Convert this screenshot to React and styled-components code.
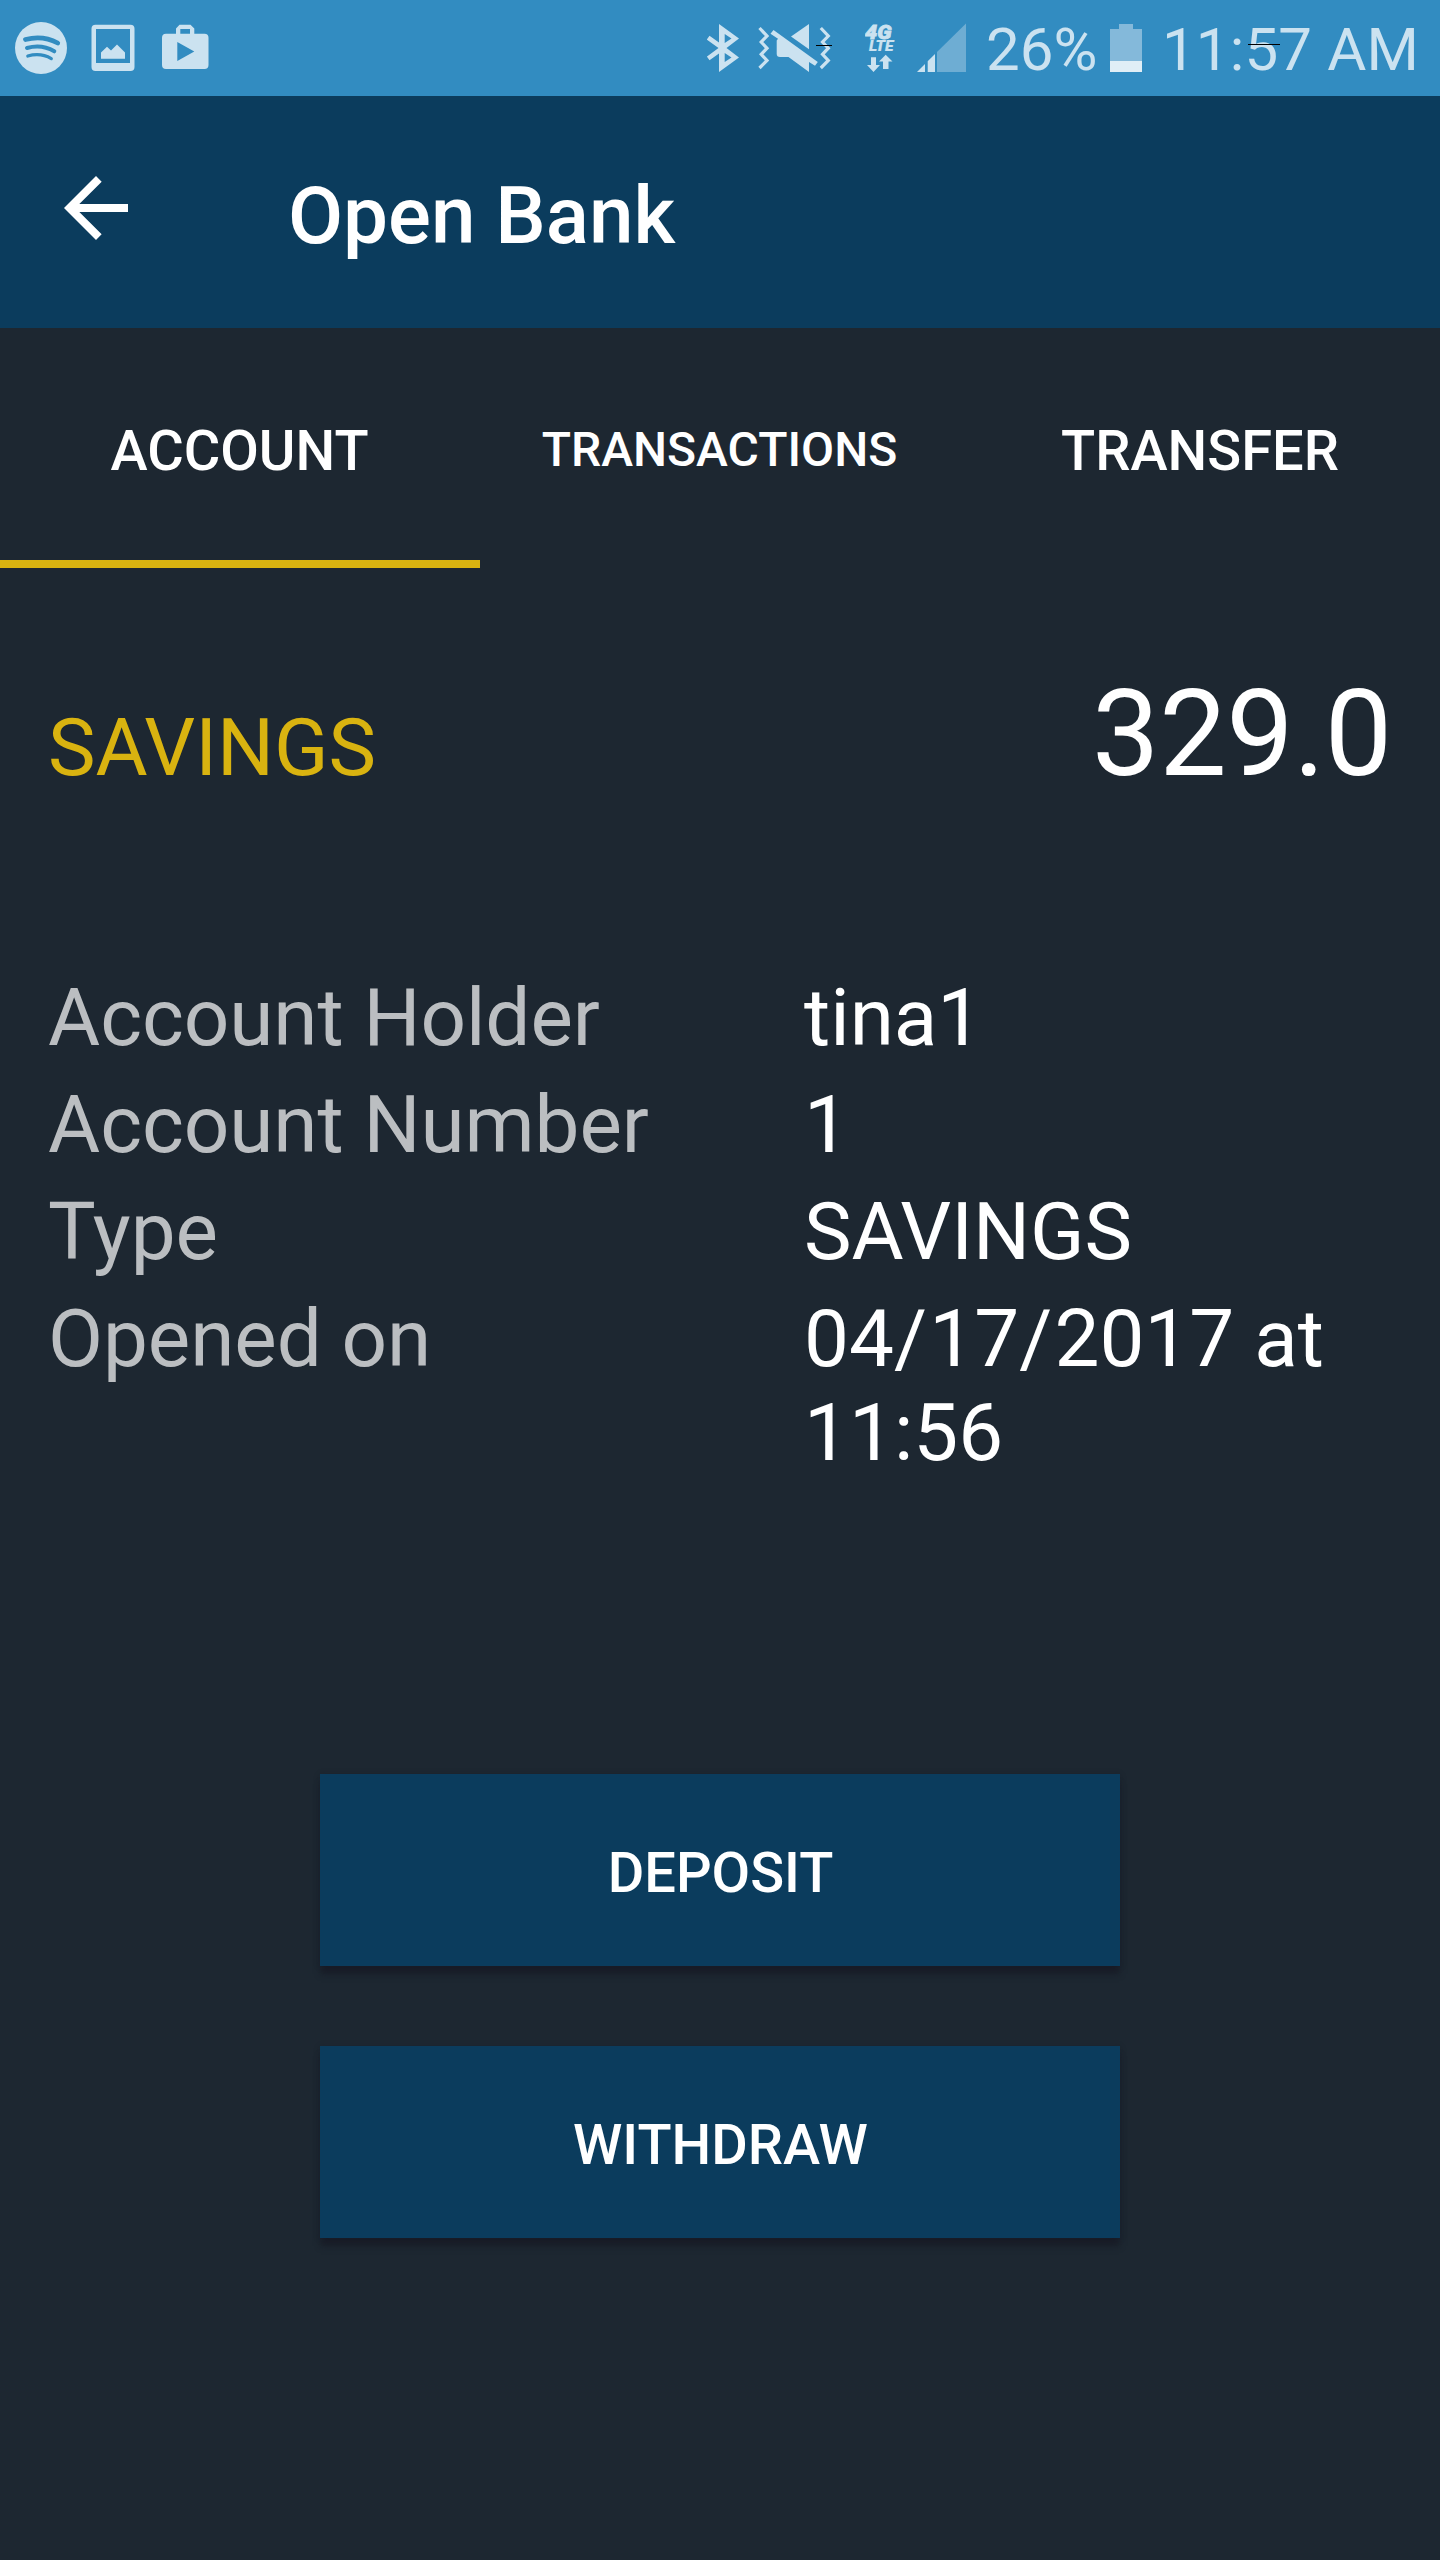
import React from 'react';
import styled, { createGlobalStyle } from 'styled-components';

const GlobalStyle = createGlobalStyle`
  *, *::before, *::after { box-sizing: border-box; }
  body {
    margin: 0;
    background: #1d2731;
    color: #ffffff;
    font-family: Roboto, "Liberation Sans", sans-serif;
  }
`;

const ICON = '#cbe2f0';

const Screen = styled.div`
  width: 1440px;
  height: 2560px;
  display: flex;
  flex-direction: column;
  background: #1d2731;
  overflow: hidden;
`;

const StatusBar = styled.div`
  height: 96px;
  flex: none;
  display: flex;
  justify-content: space-between;
  background: #328cc1;
  color: ${ICON};
`;

const StatusGroup = styled.div`
  display: flex;
  align-items: flex-start;
  padding-left: ${(p) => p.$inset || 0}px;
`;

const StatusIcon = styled.svg`
  display: block;
  flex: none;
  height: 96px;
  width: ${(p) => p.$width}px;
  margin-right: ${(p) => p.$gap || 0}px;
`;

const StatusText = styled.div`
  position: relative;
  flex: none;
  width: ${(p) => p.$width}px;
  padding-top: 15px;
  font-size: 60px;
  line-height: 70px;
  letter-spacing: ${(p) => p.$tracking || 0}px;
  white-space: nowrap;
`;

const ScanLine = styled.span`
  position: absolute;
  left: 86px;
  top: 44px;
  width: 32px;
  height: 1px;
  background: #000000;
`;

const AppBar = styled.header`
  height: 232px;
  flex: none;
  display: flex;
  align-items: flex-start;
  padding: 64px 48px 0;
  background: #0b3c5d;
`;

const BackButton = styled.button`
  width: 96px;
  height: 96px;
  padding: 0;
  border: 0;
  background: none;
  margin-right: 144px;
`;

const Title = styled.h1`
  margin: 9px 0 0;
  font-size: 80px;
  line-height: 94px;
  font-weight: 500;
`;

const Tabs = styled.nav`
  height: 240px;
  flex: none;
  display: grid;
  grid-template-columns: repeat(3, 1fr);
`;

const Tab = styled.div`
  display: flex;
  align-items: center;
  justify-content: center;
  padding-top: ${(p) => (p.$small ? 12 : 14)}px;
  padding-right: ${(p) => p.$nudge || 0}px;
  border-bottom: 8px solid ${(p) => (p.$active ? '#d9b310' : 'transparent')};
  font-size: ${(p) => (p.$small ? 48 : 56)}px;
  line-height: ${(p) => (p.$small ? 56 : 66)}px;
  font-weight: 500;
`;

const Content = styled.main`
  display: flex;
  flex-direction: column;
  padding: 96px 48px 0;
`;

const Summary = styled.div`
  display: flex;
  align-items: baseline;
  justify-content: space-between;
  height: 141px;
`;

const AccountType = styled.div`
  font-size: 80px;
  line-height: 94px;
  color: #d9b310;
`;

const Balance = styled.div`
  font-size: 120px;
  line-height: 141px;
  letter-spacing: -0.3px;
`;

const Details = styled.dl`
  margin: 166px 0 0;
  display: grid;
  grid-template-columns: 756px 1fr;
  row-gap: 13px;
  font-size: 80px;
  line-height: 94px;
`;

const Label = styled.dt`
  color: #bbbec1;
  letter-spacing: -0.06px;
`;

const Value = styled.dd`
  margin: 0;
`;

const Slash = styled.span`
  letter-spacing: 2.3px;
`;

const Actions = styled.div`
  margin-top: 294px;
  display: flex;
  flex-direction: column;
  align-items: center;
  gap: 80px;
`;

const ActionButton = styled.button`
  width: 800px;
  height: 192px;
  padding: 6px 0 0 1px;
  border: 0;
  background: #0b3c5d;
  color: #ffffff;
  font-family: inherit;
  font-size: 56px;
  line-height: 66px;
  font-weight: 500;
  box-shadow: 0 9px 6px -1px rgba(22, 22, 34, 0.6), 0 1px 6px rgba(20, 20, 30, 0.25);
`;

const details = [
  { label: 'Account Holder', value: 'tina1' },
  { label: 'Account Number', value: '1' },
  { label: 'Type', value: 'SAVINGS' },
  {
    label: 'Opened on',
    value: (
      <>
        04<Slash>/</Slash>17<Slash>/</Slash>2017 at 11:56
      </>
    ),
  },
];

const SpotifyIcon = () => (
  <StatusIcon $width={52} $gap={24} viewBox="15 0 52 96">
    <circle cx="41" cy="48" r="26" fill={ICON} />
    <g fill="none" stroke="#328cc1" strokeLinecap="round">
      <path d="M25.500 39.500 C36 36.700 48 37.800 57.700 43" strokeWidth="4.800" />
      <path d="M27 48 C36 45.400 46 46.400 54.300 51.300" strokeWidth="4" />
      <path d="M27.800 56 C36 53.700 44 54.300 51.300 58.600" strokeWidth="3.200" />
    </g>
  </StatusIcon>
);

const PictureIcon = () => (
  <StatusIcon $width={44} $gap={27} viewBox="91 0 44 96">
    <path
      fill={ICON}
      fillRule="evenodd"
      d="M95.500 24.700h35a4 4 0 0 1 4 4v38.400a4 4 0 0 1-4 4h-35a4 4 0 0 1-4-4V28.700a4 4 0 0 1 4-4z M96 29v34h34V29z"
    />
    <path fill={ICON} d="M101 58.700V52.500L107 46.700L111 50.500L117 44.500L125 52.500V58.700z" />
  </StatusIcon>
);

const PlayBagIcon = () => (
  <StatusIcon $width={47} viewBox="162 0 47 96">
    <path
      fill={ICON}
      fillRule="evenodd"
      d="M166 33.700H176V28.500L179.500 24.700H190.500L194.300 28.500V33.700H204.500a4 4 0 0 1 4 4V65a4 4 0 0 1-4 4H166a4 4 0 0 1-4-4V37.700a4 4 0 0 1 4-4z M180.300 29V33.700H190V29z M177.300 42V61L194.300 51.500z"
    />
  </StatusIcon>
);

const BluetoothIcon = () => (
  <StatusIcon $width={32} $gap={19} viewBox="707 0 32 96">
    <path
      fill={ICON}
      fillRule="evenodd"
      d="M719 24L739 38.500L726.500 48L739 57.500L719 72V53.500L709.500 60.300L706.800 56.600L718.500 48L706.800 39.500L709.500 35.700L719 42.500z M724.700 34V43L731.500 38.500z M724.700 53V62L731.500 57.500z"
    />
  </StatusIcon>
);

const MuteIcon = () => (
  <StatusIcon $width={74} $gap={33} viewBox="758 0 74 96">
    <g fill="none" stroke={ICON} strokeWidth="3.200">
      <path d="M759.500 28L767 36L761.200 42L767 48.200L761.200 54.300L767 60.500L759.500 68" />
      <path d="M820.800 28L828.300 36L822.500 42L828.300 48.200L822.500 54.300L828.300 60.500L820.800 68" />
    </g>
    <path fill={ICON} d="M809 24V49.300L791 36.500z" />
    <path
      fill={ICON}
      d="M773.500 30L817.800 62L815 65.800L809 62V72L788.500 57H780A3.300 3.300 0 0 1 776.700 53.700V40.500L778 38.800L770.500 33.700z"
    />
    <rect x="816" y="45" width="16" height="1" fill="#000000" />
  </StatusIcon>
);

const NetworkIcon = () => (
  <StatusIcon $width={30} $gap={22} viewBox="865 0 30 96">
    <text
      fill={ICON}
      stroke={ICON}
      fontFamily="Roboto, 'Liberation Sans', sans-serif"
      fontStyle="italic"
      fontWeight="900"
    >
      <tspan x="865" y="38.500" fontSize="20" strokeWidth="0.800" textLength="26.500" lengthAdjust="spacingAndGlyphs">4G</tspan>
      <tspan x="869" y="51" fontSize="15" strokeWidth="0.200" textLength="24.500" lengthAdjust="spacingAndGlyphs">LTE</tspan>
    </text>
    <path fill={ICON} d="M871 57.300H876V65H880L873.500 72L867 65H871z" />
    <path fill={ICON} d="M883 69V61.500H879L885.700 54.700L892.500 61.500H888.500V69z" />
  </StatusIcon>
);

const SignalIcon = () => (
  <StatusIcon $width={49} $gap={20} viewBox="917 0 49 96">
    <path fill="#6eadd3" d="M937 72V52L966 23.500V72z" />
    <path fill={ICON} d="M917 72L925 64V72z M927.700 72V61.300L935 54V72z" />
  </StatusIcon>
);

const BatteryIcon = () => (
  <StatusIcon $width={32} $gap={20} viewBox="1110 0 32 96">
    <path fill="#84b9da" d="M1110 29H1119V24H1133V29H1142V72H1110z" />
    <rect x="1110" y="61" width="32" height="11" fill="#e0eef6" />
  </StatusIcon>
);

export default function App() {
  return (
    <>
      <GlobalStyle />
      <Screen>
        <StatusBar>
          <StatusGroup $inset={15}>
            <SpotifyIcon />
            <PictureIcon />
            <PlayBagIcon />
          </StatusGroup>
          <StatusGroup>
            <BluetoothIcon />
            <MuteIcon />
            <NetworkIcon />
            <SignalIcon />
            <StatusText $width={124}>26%</StatusText>
            <BatteryIcon />
            <StatusText $width={278} $tracking={0.15}>
              11:57 AM
              <ScanLine />
            </StatusText>
          </StatusGroup>
        </StatusBar>
        <AppBar>
          <BackButton aria-label="Back">
            <svg width="96" height="96" viewBox="0 0 24 24" fill="#ffffff">
              <path d="M20 11H7.830l5.590-5.590L12 4l-8 8 8 8 1.410-1.410L7.830 13H20v-2z" />
            </svg>
          </BackButton>
          <Title>Open Bank</Title>
        </AppBar>
        <Tabs>
          <Tab $active $nudge={1}>ACCOUNT</Tab>
          <Tab $small $nudge={1}>TRANSACTIONS</Tab>
          <Tab>TRANSFER</Tab>
        </Tabs>
        <Content>
          <Summary>
            <AccountType>SAVINGS</AccountType>
            <Balance>329.0</Balance>
          </Summary>
          <Details>
            {details.map(({ label, value }) => (
              <React.Fragment key={label}>
                <Label>{label}</Label>
                <Value>{value}</Value>
              </React.Fragment>
            ))}
          </Details>
          <Actions>
            <ActionButton>DEPOSIT</ActionButton>
            <ActionButton>WITHDRAW</ActionButton>
          </Actions>
        </Content>
      </Screen>
    </>
  );
}
